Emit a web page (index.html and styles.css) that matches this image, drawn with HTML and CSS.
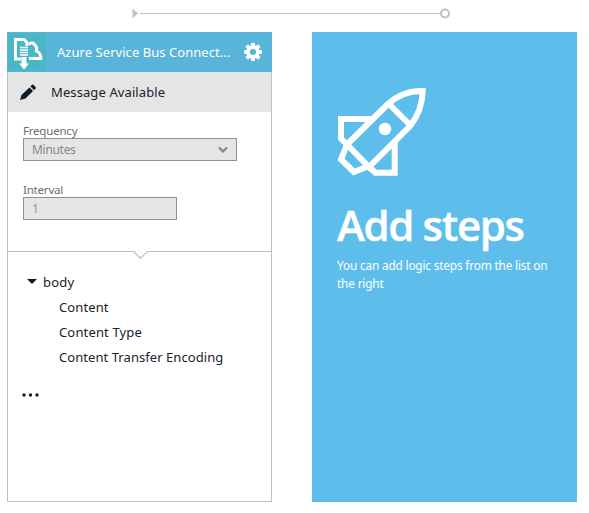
FILE: index.html
```html
<!DOCTYPE html>
<html lang="en">
<head>
<meta charset="utf-8">
<title>Logic designer</title>
<link rel="stylesheet" href="styles.css">
</head>
<body>
<div class="flow">
  <svg width="320" height="14" viewBox="0 0 320 14">
    <path d="M1.5 2.5L7 7.5L1.5 12.5Z" fill="#bfc3c8"/>
    <path d="M9 7.5H310" stroke="#bcbec1"/>
    <circle cx="314" cy="7.5" r="4" fill="#fff" stroke="#bcc0c8" stroke-width="2"/>
  </svg>
</div>
<main class="cards">
  <section class="card">
    <header class="head">
      <span class="logo">
        <svg width="40" height="40" viewBox="0 0 40 40" fill="none" stroke="#fff" stroke-width="3">
          <path d="M14 27H8.500V7.500H17L20 10.500V14"/>
          <path d="M22 12.500Q24.500 9.500 27 12Q30.500 15 29.500 19Q34 21 33.800 26.500H22"/>
          <path d="M13 15.500H21M13 18H21M13 20.500H21M13 23H21" stroke-width="1.600"/>
          <path d="M14.500 25H19.500V31.500H22L17 37.500L12 31.500H14.500Z" fill="#fff" stroke="none"/>
        </svg>
      </span>
      <span class="name">Azure Service Bus Connect...</span>
      <svg class="gear" width="18" height="18" viewBox="-9 -9 18 18">
        <g fill="#fff"><path id="t" d="M-1.800-9H1.800L2.300-4H-2.300Z"/><use href="#t" transform="rotate(45)"/><use href="#t" transform="rotate(90)"/><use href="#t" transform="rotate(135)"/><use href="#t" transform="rotate(180)"/><use href="#t" transform="rotate(225)"/><use href="#t" transform="rotate(270)"/><use href="#t" transform="rotate(315)"/></g>
        <circle r="4.900" fill="none" stroke="#fff" stroke-width="3.600"/>
      </svg>
    </header>
    <div class="action">
      <svg width="18" height="18" viewBox="0 0 18 18" fill="#101c28">
        <path d="M1 17L2.500 12L10.500 4.400L14.100 8L6.500 15.500Z"/>
        <path d="M11.400 3.500L12.800 2.100Q13.700 1.200 14.600 2L16.500 3.900Q17.300 4.800 16.500 5.700L15 7.100Z"/>
      </svg>
      <span class="action-name">Message Available</span>
    </div>
    <div class="fields">
      <div class="label frequency">Frequency</div>
      <div class="input select"><span>Minutes</span>
        <svg width="12" height="8" viewBox="0 0 12 8"><path d="M2 1.500L6 5.500L10 1.500" fill="none" stroke="#7b858c" stroke-width="2.200"/></svg>
      </div>
      <div class="label interval">Interval</div>
      <div class="input number"><span>1</span></div>
    </div>
    <div class="outputs">
      <svg class="notch" width="16" height="9" viewBox="0 0 16 9"><path d="M1 0H15L8 7Z" fill="#fff"/><path d="M.5 .5L7.500 7.300L14.500 .5" fill="none" stroke="#bfc1c3" stroke-width="1.200"/></svg>
      <div class="root"><svg width="10" height="5" viewBox="0 0 10 5"><path d="M0 0H10L5 5Z" fill="#101c28"/></svg><span class="body">body</span></div>
      <ul>
        <li class="content">Content</li>
        <li class="type">Content Type</li>
        <li class="encoding">Content Transfer Encoding</li>
      </ul>
      <svg class="more" width="18" height="4" viewBox="0 0 18 4" fill="#101c28"><circle cx="2" cy="2" r="1.700"/><circle cx="8.500" cy="2" r="1.700"/><circle cx="15" cy="2" r="1.700"/></svg>
    </div>
  </section>
  <section class="steps">
    <svg width="90" height="90" viewBox="0 0 90 90" fill="none" stroke="#fff" stroke-width="6">
      <path d="M10 57.500L51 17Q66 3.500 85.700 4Q85.200 24 73 39L32 80Z"/>
      <path d="M52 17L73 38"/>
      <path d="M37 32H4V51.500L10 57.500"/>
      <path d="M57.700 54V85.700H38.500L32 80"/>
      <path d="M10 57.500L4 72.500L17 85L32 79"/>
      <circle cx="48" cy="42" r="6.200" fill="#fff" stroke="none"/>
    </svg>
    <h1>Add steps</h1>
    <p>You can add logic steps from the list on<br>the right</p>
  </section>
</main>
</body>
</html>
```
FILE: styles.css
```css
* { box-sizing: border-box; }
body { margin: 0; background: #fff; font-family: "Noto Sans", "Open Sans", sans-serif; font-size: 13px; color: #1a222c; }
svg { display: block; flex: none; }
.flow { height: 32px; padding: 6px 0 0 131px; }
.cards { display: flex; gap: 40px; padding-left: 7px; }
.card { width: 265px; height: 470px; border: 1px solid #bfc1c3; border-top: 0; }
.head { display: flex; align-items: center; height: 40px; margin: 0 -1px; background: #59b4d9; color: #fff; }
.logo { width: 40px; height: 40px; background: #4bb6c8; border: 1px solid #56b9cd; }
.logo svg { margin: -1px; }
.name { width: 187px; padding-left: 10px; white-space: nowrap; letter-spacing: .05px; }
.gear { margin-left: 10px; }
.action { display: flex; align-items: center; height: 40px; padding-left: 11px; background: #e5e5e5; }
.action-name { margin-left: 14px; letter-spacing: .1px; }
.fields { height: 140px; padding: 11px 0 0 15px; border-bottom: 1px solid #bfc1c3; color: #6d6d6d; }
.label { height: 15px; font-size: 11.5px; line-height: 16px; letter-spacing: -.2px; }
.interval { margin-top: 21px; }
.input { display: flex; align-items: center; justify-content: space-between; height: 23px; border: 1px solid #8f9193; background: #e5e5e5; padding: 0 7px 0 8px; font-size: 12px; letter-spacing: -.3px; color: #85888b; }
.select { width: 214px; }
.number { width: 154px; color: #7c99b0; }
.notch { margin: -1px 0 0 125px; }
.root { display: flex; align-items: center; height: 25px; margin: 9px 0 0 19px; }
.root svg { margin-top: -1px; }
.root span { margin-left: 6px; letter-spacing: .2px; }
ul { list-style: none; margin: 0; padding: 1px 0 0 51px; }
li { height: 25px; line-height: 25px; white-space: nowrap; }
.content { letter-spacing: .1px; }
.type { letter-spacing: .15px; }
.encoding { letter-spacing: .06px; }
.more { margin: 23px 0 0 14px; }
.steps { width: 265px; height: 470px; padding: 55px 0 0 25px; background: #5dbeec; color: #fff; }
h1 { margin: 18px 0 0; font: 600 42px/60px "Open Sans", sans-serif; letter-spacing: -1.35px; -webkit-text-stroke: .4px #fff; white-space: nowrap; }
p { margin: 1px 0 0; font-size: 11.8px; line-height: 18px; letter-spacing: -.16px; white-space: nowrap; }
```
